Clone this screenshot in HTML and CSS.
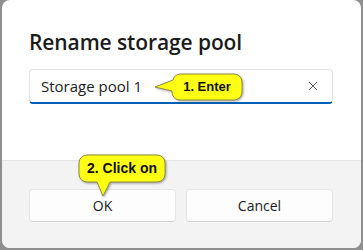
FILE: index.html
```html
<!DOCTYPE html>
<html lang="en">
<head>
    <meta charset="UTF-8">
    <meta name="viewport" content="width=device-width, initial-scale=1.0">
    <title>Rename storage pool</title>
    <link rel="stylesheet" href="styles.css">
</head>
<body>
    <div class="dialog">
        <div class="content">
            <h1>Rename storage pool</h1>
            <div class="field">
                <span class="field-value">Storage pool 1</span>
                <svg class="clear" viewBox="0 0 10 10">
                    <path d="M1,1 L9,9 M9,1 L1,9" stroke="#5f5f5f" stroke-width="1" fill="none"/>
                </svg>
            </div>
        </div>
        <div class="footer">
            <button class="btn">OK</button>
            <button class="btn">Cancel</button>
        </div>
    </div>

    <!-- callouts -->
    <div class="callout callout-enter">
        <svg viewBox="0 0 92 30" width="92" height="30">
            <path d="M27,2 H81 A8,8 0 0 1 89,10 V20 A8,8 0 0 1 81,28 H27 A8,8 0 0 1 19,20 V19 L2,15 L20,8 A8,8 0 0 1 27,2 Z"
                  fill="#ffff14" stroke="#8e8e3c" stroke-width="1"/>
        </svg>
        <span class="callout-text">1. Enter</span>
    </div>
    <div class="callout callout-click">
        <svg viewBox="0 0 90 45" width="90" height="45">
            <path d="M10,2 H80 A8,8 0 0 1 88,10 V21 A8,8 0 0 1 80,29 H33 L26,43 L20,29 H10 A8,8 0 0 1 2,21 V10 A8,8 0 0 1 10,2 Z"
                  fill="#ffff14" stroke="#8e8e3c" stroke-width="1"/>
        </svg>
        <span class="callout-text">2. Click on</span>
    </div>
</body>
</html>
```
FILE: styles.css
```css
html, body {
    margin: 0;
    padding: 0;
}
body {
    width: 363px;
    height: 250px;
    overflow: hidden;
    background-color: #8f8f8f;
    font-family: "Open Sans", "Noto Sans", sans-serif;
    position: relative;
}
.dialog {
    margin: 0 2px 0 2px;
    height: 248px;
    background-color: #fff;
    border-radius: 8px;
    overflow: hidden;
    display: flex;
    flex-direction: column;
}
.content {
    height: 160px;
    padding: 26px 28px 0 27px;
    box-sizing: border-box;
}
h1 {
    margin: 0 0 11px 0;
    font-size: 21px;
    font-weight: 600;
    line-height: 32px;
    color: #1b1b1b;
    letter-spacing: -0.1px;
}
.field {
    height: 35px;
    box-sizing: border-box;
    border: 1px solid #e6e6e6;
    border-bottom: 2px solid #005fb8;
    border-radius: 4px;
    display: flex;
    align-items: center;
    padding: 0 14px 0 11px;
}
.field-value {
    flex: 1;
    font-size: 15px;
    color: #1b1b1b;
}
.clear {
    width: 10px;
    height: 10px;
}
.footer {
    flex: 1;
    background-color: #f3f3f3;
    border-top: 1px solid #e5e5e5;
    display: grid;
    grid-template-columns: 1fr 1fr;
    column-gap: 10px;
    padding: 28px 28px 0 27px;
    align-items: start;
}
.btn {
    height: 33px;
    background-color: #fdfdfd;
    border: 1px solid #e5e5e5;
    border-bottom-color: #d4d4d4;
    border-radius: 4px;
    font-family: "Open Sans", "Noto Sans", sans-serif;
    font-size: 14px;
    color: #1b1b1b;
    padding: 0;
}
.callout {
    position: absolute;
}
.callout svg {
    display: block;
    filter: drop-shadow(1px 1px 1px rgba(0, 0, 0, 0.35));
}
.callout-text {
    position: absolute;
    font-family: "Liberation Sans", Arial, sans-serif;
    font-weight: bold;
    font-size: 13px;
    color: #111;
    text-align: center;
}
.callout-enter {
    left: 153px;
    top: 72px;
}
.callout-enter .callout-text {
    left: 19px;
    top: 2px;
    width: 70px;
    line-height: 26px;
}
.callout-click {
    left: 77px;
    top: 153px;
}
.callout-click .callout-text {
    left: 2px;
    top: 2px;
    width: 86px;
    line-height: 27px;
    font-size: 14px;
}
```
